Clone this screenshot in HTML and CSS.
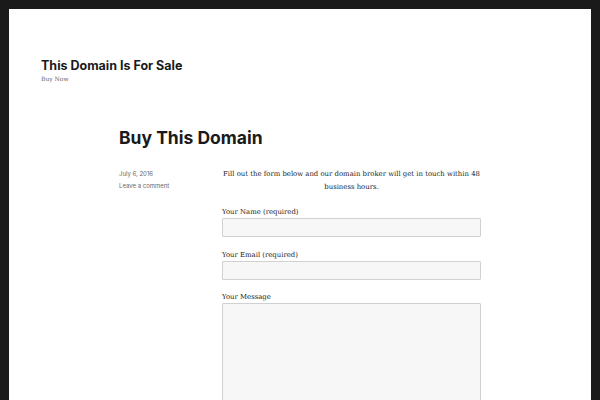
FILE: index.html
```html
<!DOCTYPE html>
<html>
<head>
<meta charset="utf-8">
<link rel="stylesheet" href="styles.css">
</head>
<body>
<div class="site">
  <header class="site-header">
    <p class="site-title">This Domain Is For Sale</p>
    <p class="site-description">Buy Now</p>
  </header>
  <main class="site-main">
    <h1 class="entry-title">Buy This Domain</h1>
    <div class="entry">
      <div class="entry-meta">
        <span class="meta-item">July 6, 2016</span>
        <span class="meta-item">Leave a comment</span>
      </div>
      <div class="entry-content">
        <p class="intro">Fill out the form below and our domain broker will get in touch within 48 business hours.</p>
        <div class="field">
          <label class="label">Your Name (required)</label>
          <div class="input"></div>
        </div>
        <div class="field">
          <label class="label">Your Email (required)</label>
          <div class="input"></div>
        </div>
        <div class="field">
          <label class="label">Your Message</label>
          <div class="input textarea"></div>
        </div>
      </div>
    </div>
  </main>
</div>
</body>
</html>
```
FILE: styles.css
```css
html, body {
  margin: 0;
  padding: 0;
  height: 100%;
  overflow: hidden;
}
body {
  background: #1a1a1a;
  padding: 9px 9px 0;
  box-sizing: border-box;
}
.site {
  background: #fff;
  height: 100%;
  color: #1a1a1a;
}
.site-header {
  padding: 49px 32px 0;
}
.site-title {
  margin: 0;
  font-family: "Inter", "DejaVu Sans", sans-serif;
  font-weight: 700;
  font-size: 12.5px;
  line-height: 16px;
}
.site-description {
  margin: 0;
  font-family: "DejaVu Serif", serif;
  font-size: 6px;
  line-height: 10px;
  color: #686868;
}
.site-main {
  padding: 42px 0 0 110px;
}
.entry-title {
  margin: 0;
  font-family: "Inter", "DejaVu Sans", sans-serif;
  font-weight: 700;
  font-size: 17.5px;
  line-height: 24px;
}
.entry {
  display: flex;
  margin-top: 18px;
}
.entry-meta {
  width: 103px;
  display: flex;
  flex-direction: column;
  gap: 3px;
  font-family: "Inter", "DejaVu Sans", sans-serif;
  font-size: 6px;
  line-height: 9px;
  color: #686868;
  padding-top: 1px;
}
.entry-content {
  width: 259px;
  font-family: "DejaVu Serif", serif;
  font-size: 6.9px;
  line-height: 13px;
  color: #1a1a1a;
}
.intro {
  margin: 0 0 13px;
  text-align: center;
}
.field {
  margin-bottom: 12.5px;
}
.label {
  display: block;
  line-height: 11px;
}
.input {
  height: 17px;
  background: #f7f7f7;
  border: 1px solid #d1d1d1;
  border-radius: 1px;
}
.textarea {
  height: 200px;
}
```
